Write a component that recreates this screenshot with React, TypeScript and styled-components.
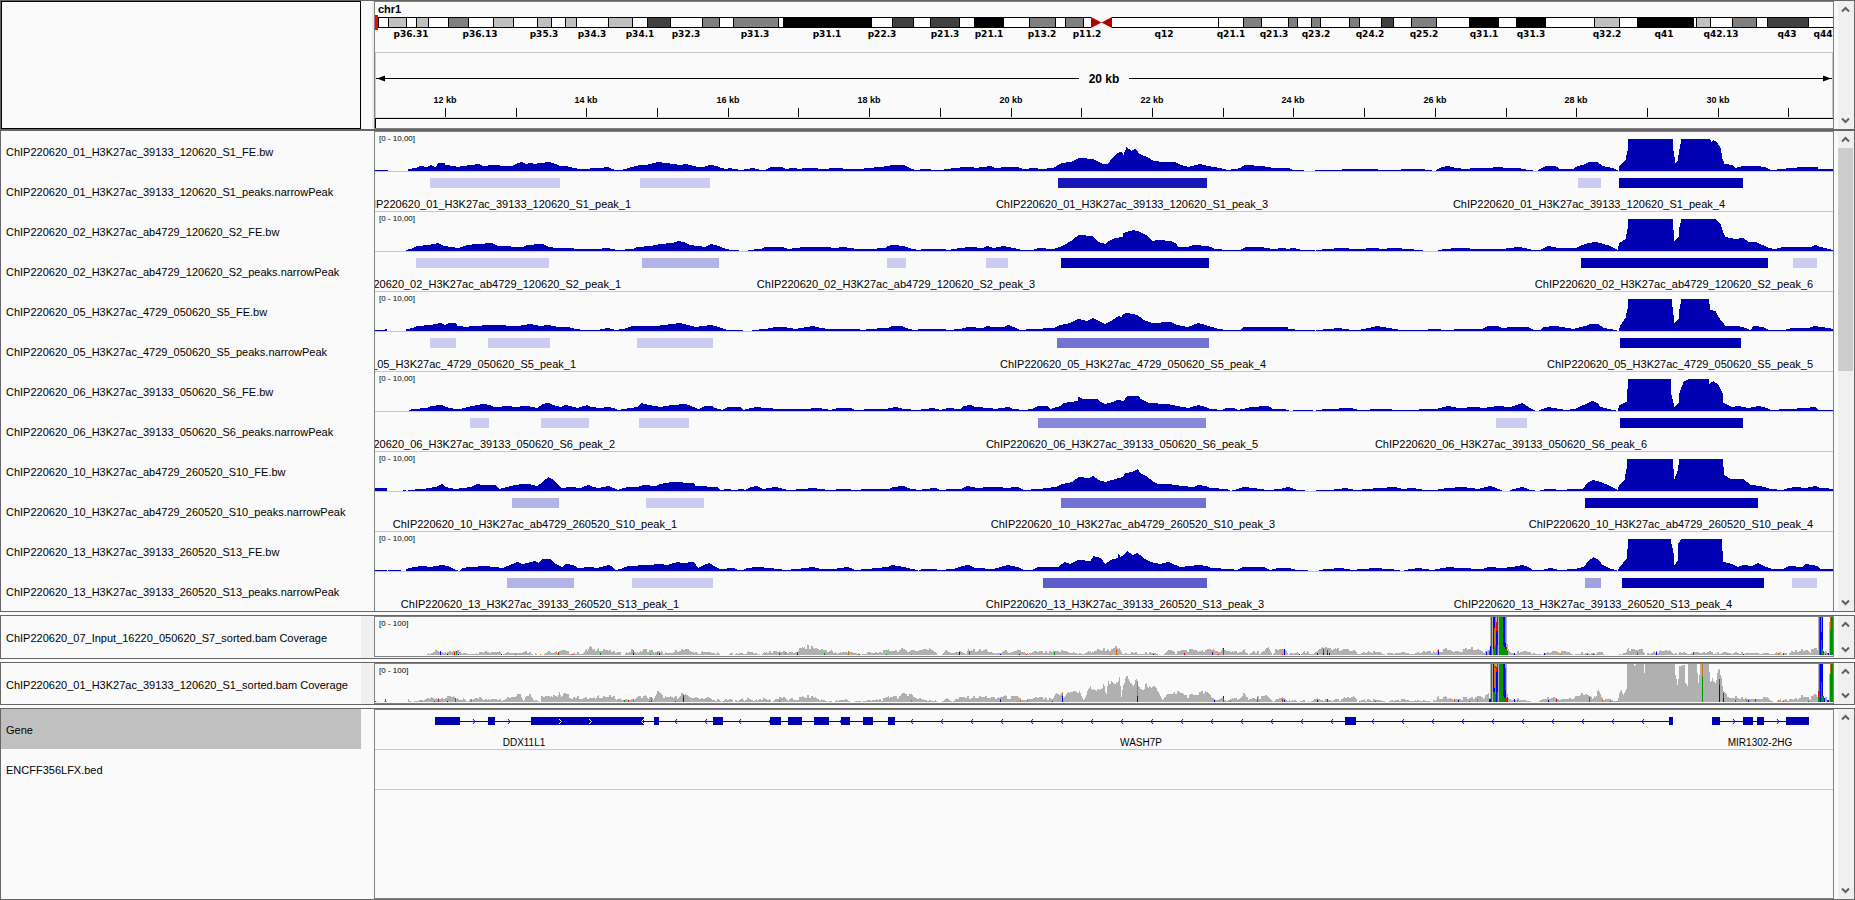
import React from "react";
import styled, { createGlobalStyle } from "styled-components";

/* ---------- data ---------- */

const VIEW_WIDTH = 1458;

const COLORS = {
  signal: "#0000b2",
  coverage: "#b0b0b0",
  rule: "#c8c8d2",
  frame: "#666666",
  innerFrame: "#808080",
  paper: "#fafafa",
};

type Point = [number, number];
type Peak = [start: number, end: number, color: string];
type Label = [center: number, text: string];

const PALE = "#ccccf0";
const SOFT = "#b4b4e8";
const FULL = "#0000b2";

interface Sample {
  name: string;
  bigwig: string;
  peaks: Peak[];
  labels: [number, number][];
}

const SAMPLES: Sample[] = [
  {
    name: "ChIP220620_01_H3K27ac_39133_120620_S1",
    bigwig:
      "0:1 12:1 13:0 32:0 33:2 40:3 45:5 52:4 55:6 60:4 63:8 69:8 70:6 78:5 83:4 87:5 96:6 103:7 107:5 118:6 130:5 137:5 140:7 146:9 150:7 156:8 159:7 165:8 174:9 180:7 185:5 190:5 198:3 205:2 225:3 232:4 237:2 240:1 245:1 250:2 256:4 265:6 270:6 283:9 290:8 298:7 305:6 310:7 315:6 322:4 328:4 334:6 342:5 345:3 352:2 353:3 360:2 365:1 378:3 385:1 390:1 395:4 407:4 410:2 417:3 425:2 428:3 442:3 443:2 465:3 470:2 485:2 492:3 505:4 518:6 528:6 532:4 537:2 540:1 550:2 560:1 568:1 570:2 582:3 587:4 597:4 600:3 615:5 620:3 632:4 642:4 648:2 660:3 665:2 678:3 686:8 695:9 704:13 718:12 723:9 728:7 732:7 737:13 742:18 746:19 748:16 751:24 756:20 760:22 764:17 768:15 772:14 778:10 788:9 800:9 805:6 813:4 824:7 832:5 838:4 845:3 852:1 860:2 865:3 869:6 887:5 898:3 913:3 918:1 927:1 929:0 939:0 940:1 966:1 967:2 985:2 995:2 1010:1 1042:2 1056:1 1057:0 1060:0 1061:1 1067:4 1073:5 1080:3 1090:2 1100:3 1113:3 1123:4 1132:3 1143:3 1153:1 1157:1 1158:0 1162:0 1163:1 1170:5 1180:5 1184:2 1198:2 1202:5 1208:6 1213:9 1222:9 1227:5 1237:3 1242:1 1243:0 1244:5 1250:11 1252:20 1253:32 1297:32 1298:20 1300:8 1302:10 1304:22 1306:32 1334:32 1336:29 1338:31 1342:28 1345:23 1347:12 1349:7 1357:6 1360:3 1368:5 1380:5 1390:4 1395:1 1408:2 1413:3 1430:4 1442:4 1443:2 1458:2",
    peaks: [
      [55, 185, PALE],
      [265, 335, PALE],
      [683, 832, "#1818b8"],
      [1203, 1226, PALE],
      [1244, 1368, FULL],
    ],
    labels: [[120, 1], [757, 3], [1214, 4]],
  },
  {
    name: "ChIP220620_02_H3K27ac_ab4729_120620_S2",
    bigwig:
      "0:0 30:0 31:1 35:2 42:5 53:6 63:8 68:5 76:4 83:3 92:6 102:7 117:8 122:5 148:4 151:6 167:7 173:4 182:3 197:3 200:2 222:2 232:3 242:1 258:2 262:4 275:5 285:7 297:8 303:10 308:9 315:6 330:4 335:7 343:5 347:3 355:1 363:1 364:0 372:0 373:1 385:2 390:4 407:4 413:2 428:4 450:4 460:3 468:4 482:2 493:2 510:3 512:5 518:6 528:5 537:2 543:1 548:2 568:2 572:1 585:3 595:4 607:3 612:5 618:3 628:5 638:3 647:1 657:1 663:3 678:2 687:5 692:8 697:11 703:16 717:15 723:9 730:7 733:10 740:13 747:14 748:18 758:21 765:19 772:15 777:10 783:11 795:10 800:8 803:4 812:4 818:6 832:5 840:2 852:1 865:1 870:4 885:4 897:2 908:3 912:2 918:3 927:1 939:1 940:0 941:1 952:2 965:3 982:2 1000:3 1007:2 1017:3 1035:2 1042:1 1047:1 1048:0 1062:0 1063:1 1070:2 1082:3 1107:2 1127:2 1143:4 1150:3 1157:1 1165:1 1173:5 1183:3 1200:3 1207:6 1213:8 1220:9 1228:7 1235:5 1242:1 1244:8 1250:12 1252:22 1253:32 1297:32 1299:10 1303:14 1304:24 1306:32 1340:32 1345:27 1348:18 1350:14 1360:12 1368:13 1373:9 1380:9 1387:6 1393:3 1400:2 1408:4 1435:4 1440:6 1445:4 1453:2 1458:1",
    peaks: [
      [41, 174, PALE],
      [267, 344, SOFT],
      [512, 531, PALE],
      [611, 633, PALE],
      [686, 834, FULL],
      [1206, 1393, FULL],
      [1418, 1442, PALE],
    ],
    labels: [[107, 1], [521, 3], [1299, 6]],
  },
  {
    name: "ChIP220620_05_H3K27ac_4729_050620_S5",
    bigwig:
      "0:1 9:1 10:2 11:2 12:0 30:0 31:2 38:3 42:5 55:6 65:8 70:6 73:8 80:8 82:5 92:4 95:5 118:6 142:5 155:7 165:5 173:6 183:4 192:4 200:2 208:1 222:1 232:3 240:1 248:2 257:5 282:5 288:6 305:8 312:6 320:4 335:6 343:4 352:1 367:1 368:0 376:0 377:1 390:2 400:4 408:4 420:2 437:5 445:3 453:2 478:2 490:1 492:2 512:3 517:5 527:5 530:3 538:1 548:2 568:2 572:1 585:2 593:4 608:3 612:5 617:4 628:4 633:6 638:4 645:1 657:2 678:3 685:6 695:8 703:12 712:10 718:13 723:10 730:7 737:11 743:15 746:14 748:17 752:18 762:16 768:11 777:8 795:9 802:6 812:4 823:8 833:5 843:2 852:1 865:1 868:4 882:4 912:4 913:2 925:1 939:1 940:0 941:1 955:2 963:3 977:1 983:1 993:3 1002:5 1013:3 1025:1 1050:1 1055:2 1075:1 1083:2 1107:2 1113:5 1122:5 1127:3 1137:4 1153:4 1158:1 1165:1 1168:4 1180:5 1198:2 1210:5 1215:7 1223:7 1228:3 1240:1 1242:0 1243:0 1245:6 1250:13 1252:22 1253:32 1296:32 1299:8 1303:12 1304:22 1306:32 1333:32 1335:21 1340:20 1343:14 1350:5 1363:5 1370:3 1375:1 1378:5 1388:4 1393:1 1408:1 1417:3 1433:3 1439:5 1453:3 1458:2",
    peaks: [
      [55, 81, PALE],
      [113, 175, PALE],
      [262, 338, PALE],
      [682, 834, "#7272d4"],
      [1245, 1366, FULL],
    ],
    labels: [[68, 1], [758, 4], [1305, 5]],
  },
  {
    name: "ChIP220620_06_H3K27ac_39133_050620_S6",
    bigwig:
      "0:0 33:0 34:1 38:2 52:3 55:5 67:6 70:4 80:2 85:2 92:4 107:7 115:6 118:4 135:5 138:4 152:5 162:3 167:7 173:8 178:6 185:4 190:6 202:3 212:6 215:4 225:3 233:4 238:3 242:1 255:3 262:4 266:8 273:6 285:4 297:6 310:7 318:4 323:2 330:5 337:5 339:3 347:1 353:4 365:4 368:1 375:3 382:4 388:3 407:2 428:2 443:3 455:1 462:3 475:3 480:1 485:1 492:2 510:2 520:4 528:2 542:1 558:3 565:1 572:3 585:2 588:5 595:6 600:4 615:3 619:2 633:4 638:2 648:1 657:2 662:5 672:5 675:2 685:5 688:8 702:10 703:14 707:12 722:12 725:9 730:7 737:9 742:11 748:10 752:15 763:15 765:12 773:8 792:7 807:4 813:3 823:6 830:4 835:2 847:1 850:3 858:3 862:1 868:2 875:4 893:5 897:2 908:2 913:1 914:0 917:0 918:1 937:1 938:0 940:0 941:1 952:2 975:3 984:1 1005:2 1027:1 1060:2 1073:5 1083:3 1100:4 1108:3 1122:5 1135:4 1147:8 1153:4 1158:1 1160:0 1163:0 1164:1 1173:4 1190:1 1200:2 1208:6 1217:10 1222:8 1225:4 1238:1 1242:0 1244:6 1251:9 1252:22 1253:32 1295:32 1296:16 1299:4 1303:8 1304:18 1308:29 1313:32 1333:32 1334:27 1338:30 1343:26 1347:18 1348:8 1357:4 1363:5 1373:3 1383:5 1392:3 1395:1 1413:2 1430:3 1440:4 1443:1 1458:1",
    peaks: [
      [95, 114, PALE],
      [166, 214, PALE],
      [264, 314, PALE],
      [663, 831, "#8888da"],
      [1121, 1152, PALE],
      [1245, 1368, FULL],
    ],
    labels: [[104, 2], [747, 5], [1136, 6]],
  },
  {
    name: "ChIP220620_10_H3K27ac_ab4729_260520_S10",
    bigwig:
      "0:3 11:3 12:0 27:0 28:1 30:1 31:0 32:0 33:1 47:2 60:4 67:7 70:4 80:2 95:4 102:7 107:6 120:6 124:2 135:5 146:7 153:7 162:5 167:9 173:14 178:11 183:6 186:3 195:4 205:3 213:6 218:4 223:3 233:5 238:3 242:1 252:4 262:4 268:6 280:5 285:7 297:9 318:8 320:5 342:4 345:1 352:2 358:1 367:2 370:1 375:4 382:5 387:2 400:4 413:1 428:2 438:3 453:1 468:2 482:1 490:2 513:2 518:4 528:5 532:3 543:1 550:2 560:3 565:1 577:2 585:2 592:5 602:3 613:4 625:4 630:3 642:4 648:1 663:2 672:3 680:4 687:7 697:9 703:14 713:13 718:15 723:11 730:9 740:12 747:14 750:18 757:19 762:22 765:18 772:14 777:10 782:7 793:7 807:5 818:4 823:6 830:5 835:3 852:2 855:0 862:2 868:4 878:3 892:1 905:2 913:4 922:1 928:1 930:0 940:0 941:1 955:1 970:3 980:1 993:2 1003:3 1020:4 1027:2 1037:3 1050:1 1060:1 1072:3 1088:4 1103:2 1115:5 1123:2 1126:1 1127:0 1134:0 1135:1 1147:4 1155:1 1159:1 1160:0 1164:0 1165:1 1173:2 1187:1 1197:2 1207:2 1212:8 1217:11 1222:10 1230:7 1237:4 1242:1 1244:6 1249:11 1251:22 1252:32 1297:32 1299:12 1302:20 1304:32 1347:32 1349:16 1355:12 1368:12 1375:6 1385:5 1395:2 1407:1 1413:3 1420:4 1430:3 1440:5 1444:3 1450:3 1457:2",
    peaks: [
      [137, 184, SOFT],
      [271, 329, PALE],
      [686, 831, "#7272d4"],
      [1210, 1383, FULL],
    ],
    labels: [[160, 1], [758, 3], [1296, 4]],
  },
  {
    name: "ChIP220620_13_H3K27ac_39133_260520_S13",
    bigwig:
      "0:1 11:1 12:0 13:1 25:1 26:0 30:0 31:2 38:4 48:5 55:4 67:6 75:4 80:1 84:0 87:3 95:4 110:5 128:3 132:5 142:9 147:7 160:10 163:8 167:12 175:12 180:7 187:4 190:7 198:6 202:3 215:4 222:3 233:6 237:4 240:1 245:2 253:5 272:6 285:7 292:6 302:9 307:8 318:9 323:3 328:6 334:8 340:4 345:2 358:3 363:1 368:1 372:3 382:4 395:3 410:1 422:2 437:4 445:2 458:2 472:4 480:1 492:2 512:4 517:6 528:4 537:2 541:1 543:0 547:2 560:2 563:1 578:2 587:5 593:6 600:3 618:2 632:6 642:4 648:1 657:1 663:4 683:4 689:9 695:7 703:11 715:10 718:15 725:13 730:7 735:11 742:13 743:17 745:14 748:16 752:20 757:16 762:18 768:13 775:9 785:7 793:9 800:6 805:4 823:6 832:5 835:3 855:2 862:1 868:4 888:4 895:1 902:3 913:3 922:1 932:1 933:0 943:0 944:1 952:2 965:3 977:1 987:2 1000:3 1013:2 1024:1 1025:0 1028:0 1029:1 1043:3 1057:1 1073:4 1083:3 1107:2 1113:4 1127:3 1137:4 1147:6 1153:4 1157:1 1167:1 1175:3 1183:1 1200:2 1208:4 1213:10 1218:14 1223:11 1227:6 1233:3 1240:1 1242:0 1244:4 1251:12 1252:22 1253:32 1295:32 1298:18 1299:6 1302:10 1303:28 1306:32 1346:32 1347:20 1348:9 1357:7 1362:4 1368:6 1377:5 1383:8 1388:5 1397:2 1408:2 1413:5 1427:4 1430:7 1442:5 1445:2 1457:2",
    peaks: [
      [132, 199, SOFT],
      [257, 338, PALE],
      [668, 832, "#5c5ccc"],
      [1210, 1226, "#a0a0e2"],
      [1247, 1389, FULL],
      [1417, 1442, PALE],
    ],
    labels: [[165, 1], [750, 3], [1218, 4]],
  },
];

interface Coverage {
  name: string;
  depth: string;
  /* "x:colour-height[,colour-height]" with the segments stacked from the bottom */
  mismatches: string;
}

const COVERAGES: Coverage[] = [
  {
    name: "ChIP220620_07_Input_16220_050620_S7_sorted.bam Coverage",
    depth:
      "0:0 50:0 53:2 65:4 72:2 82:4 87:2 92:1 100:2 123:4 127:1 130:3 142:2 150:4 160:1 162:0 167:1 174:4 178:1 183:4 190:4 195:2 208:2 212:5 215:9 218:4 223:6 228:6 237:3 248:1 258:5 263:1 267:6 273:4 282:3 290:2 295:1 303:5 310:5 318:3 323:1 327:4 335:2 342:2 345:0 352:0 355:2 358:0 362:1 377:3 383:1 386:0 390:2 400:4 408:3 418:2 423:5 428:7 435:8 442:6 455:4 462:1 467:3 475:3 482:1 493:2 500:2 505:3 517:5 533:5 540:4 548:6 558:5 562:1 565:0 567:2 570:4 578:2 585:3 591:1 594:6 600:4 612:5 618:1 632:4 637:2 645:4 653:1 660:3 678:3 688:4 705:1 715:3 727:6 737:5 742:8 747:1 758:2 773:2 785:1 788:0 790:3 794:5 800:2 807:5 815:5 822:5 825:3 832:5 838:5 845:3 848:7 855:2 870:5 873:0 878:3 887:2 893:7 897:0 900:5 910:5 913:1 920:3 925:0 930:3 938:1 948:7 958:6 968:5 978:4 984:1 997:3 1005:3 1010:1 1017:1 1030:2 1045:2 1053:4 1060:2 1063:5 1073:5 1080:4 1097:7 1102:4 1112:4 1114:6 1115:38 1131:38 1132:9 1133:4 1140:2 1150:4 1157:2 1165:1 1177:3 1187:3 1197:1 1202:1 1210:2 1227:2 1230:0 1245:1 1253:5 1267:4 1270:1 1280:3 1293:5 1298:1 1305:2 1313:1 1330:3 1342:2 1363:2 1380:2 1395:1 1405:2 1413:1 1420:4 1428:5 1435:4 1440:6 1442:5 1443:38 1447:38 1448:4 1453:3 1454:33 1455:38 1458:38",
    mismatches:
      "65:b3,r1 72:b1 79:r3 81:g4 83:b1 126:b1 140:g1 165:o1 183:g2,r1 197:r1 225:g2 258:b2,o3 275:g1 282:o3 284:b2 404:r2 410:o3 422:b1,r2 449:g2 473:o4 484:r1 511:g1 536:o1 584:b3 594:g3,r1 625:b1 644:b1 651:r1 679:g3 735:o1 741:o4,r1 778:b1 809:r2 837:b2,r1 843:r1 848:g6,b1 907:r1 909:b6 924:b1 942:b2 948:b2,r4 952:b2,r3 954:b2 1063:b4,r1 1111:b3 1114:r4 1115:b9 1116:g38 1118:g6,b32 1119:g8,o19,b11 1120:g10,o28 1121:b24,r9 1122:g10,b14,r14 1124:g38 1125:g38 1126:g38 1127:g38 1128:g10,b28 1129:g8,b30 1130:g6,b6,o26 1131:g6,r2 1132:r4 1139:b2 1169:b2 1185:o1 1212:b1 1218:b1 1262:g2,o1 1281:b3,o1 1318:r3 1352:o1 1368:b1 1403:o2 1408:r2 1444:g38 1445:b38 1446:g15,b8,o15 1447:g6,b32 1448:g2,r2 1450:b1 1452:o2 1453:b2 1455:g25,o13 1456:g6,r32 1457:g38",
  },
  {
    name: "ChIP220620_01_H3K27ac_39133_120620_S1_sorted.bam Coverage",
    depth:
      "0:1 1:1 3:0 8:0 10:2 12:0 15:1 18:0 32:0 33:2 36:0 42:1 50:3 56:6 60:2 65:4 72:4 78:5 83:2 88:3 92:0 95:3 102:5 110:2 120:4 125:2 133:5 140:6 145:10 148:2 152:7 155:7 160:1 165:1 166:7 175:6 181:5 184:10 186:4 189:8 195:5 200:5 207:4 213:4 218:3 223:6 237:5 243:2 248:3 258:2 263:5 268:6 278:3 282:10 287:6 293:4 302:5 305:8 308:8 312:5 320:4 333:4 338:2 343:2 346:0 350:3 355:3 358:0 368:3 378:2 390:3 397:1 405:5 413:2 422:3 428:5 438:5 445:2 455:1 458:0 462:1 472:3 475:0 482:1 493:1 502:2 510:3 518:7 522:5 528:7 535:9 538:5 547:3 553:1 560:2 563:0 572:3 577:1 585:4 595:5 605:5 613:5 620:3 627:6 633:4 640:5 647:2 655:2 662:4 672:3 678:3 680:7 687:8 688:4 695:12 702:9 704:10 708:2 715:15 723:11 728:17 731:10 733:21 740:16 744:23 746:5 748:18 752:26 757:15 761:21 767:13 771:17 775:13 780:15 783:11 787:3 791:8 797:7 800:10 805:9 812:6 822:8 830:10 837:4 840:2 848:4 852:1 863:4 870:9 873:2 880:4 892:5 897:1 907:4 915:1 920:3 922:0 928:1 931:0 942:3 946:1 952:2 962:2 978:5 982:1 997:2 1008:2 1010:0 1017:1 1033:2 1053:1 1056:0 1061:2 1063:5 1077:3 1083:4 1095:4 1108:5 1113:8 1114:4 1115:38 1131:38 1132:6 1133:3 1143:3 1153:1 1157:0 1163:0 1167:4 1180:3 1193:2 1202:6 1210:8 1215:7 1217:3 1223:10 1227:3 1242:2 1243:6 1246:14 1248:8 1251:15 1252:38 1258:38 1259:36 1261:38 1268:38 1269:29 1270:38 1299:38 1300:26 1302:19 1303:25 1304:36 1309:37 1310:18 1312:16 1313:38 1321:38 1323:18 1325:38 1333:38 1335:18 1337:24 1340:20 1344:33 1346:24 1348:9 1353:5 1362:4 1368:4 1380:3 1390:4 1397:1 1400:0 1405:2 1417:2 1423:4 1428:6 1435:4 1440:7 1442:5 1443:38 1447:38 1448:6 1453:3 1454:27 1455:38 1458:38",
    mismatches:
      "0:r1 10:g2,r1 46:o1 59:r1 63:r3 72:b1 80:g4 96:o3 249:g2 253:r2 258:o3 274:g1 276:g2,o3 300:r1 308:b5,r2 404:o2 536:o2 625:b2,r1 642:o1 645:o2 652:o2 677:g1 687:b6,o3 762:b6,o15 839:b2 848:g4,b2 855:g1 882:g2,o3 907:r3 909:b2 942:b2 952:r3 984:o1 1000:r1 1079:o3 1083:b2 1094:g1 1102:o3 1114:b3 1115:b3 1116:g38 1118:g10,b28 1119:g10,b4,o24 1120:g8,o26,r2 1121:b30,r5 1122:g10,b22,r6 1124:g38 1125:g38 1126:g38 1127:g38 1128:g6,b32 1129:g4,b34 1130:g4,b8,r22 1131:r4 1132:r5 1139:b3 1142:o2 1173:b2 1181:r3 1214:g4,r1 1227:o2 1235:r1 1242:o1 1327:g26,o12 1344:b17,r6 1348:b4,r5 1360:g2 1371:o2 1373:b2 1380:r3 1403:o2 1408:g1 1412:o1 1433:g1 1443:g5,r6 1444:g38 1445:b38 1446:g20,b18 1447:g6,b32 1448:g2,r4 1449:b4 1452:r2 1453:b2 1455:g28,o10 1456:g6,r32 1457:g38",
  },
];

const SHADES = ["#c0c0c0", "#808080", "#404040", "#000000"];

/* start, end and stain level of each stained cytoband */
const BANDS: [number, number, number][] = [
  [13, 31, 0], [41, 53, 0], [73, 93, 1], [118, 138, 0], [162, 176, 0], [190, 201, 0],
  [233, 257, 0], [272, 295, 2], [327, 344, 1], [358, 403, 1], [408, 496, 3], [517, 538, 2],
  [555, 584, 2], [599, 628, 3], [654, 680, 1], [690, 708, 1], [868, 886, 1], [913, 922, 1],
  [936, 945, 1], [974, 984, 1], [1006, 1018, 2], [1036, 1061, 1], [1094, 1123, 3],
  [1141, 1170, 3], [1219, 1244, 0], [1262, 1318, 3], [1321, 1335, 0], [1357, 1381, 1],
  [1392, 1433, 2],
];

const BAND_LABELS: Label[] = [
  [36, "p36.31"], [105, "p36.13"], [169, "p35.3"], [217, "p34.3"], [265, "p34.1"],
  [311, "p32.3"], [380, "p31.3"], [452, "p31.1"], [507, "p22.3"], [570, "p21.3"],
  [614, "p21.1"], [667, "p13.2"], [712, "p11.2"], [789, "q12"], [856, "q21.1"],
  [899, "q21.3"], [941, "q23.2"], [995, "q24.2"], [1049, "q25.2"], [1109, "q31.1"],
  [1156, "q31.3"], [1232, "q32.2"], [1289, "q41"], [1346, "q42.13"], [1412, "q43"],
  [1448, "q44"],
];

const TICKS = [
  70, 141, 211, 282, 353, 423, 494, 565, 636, 706, 777, 848, 918, 989, 1060, 1131, 1201,
  1272, 1343, 1413,
];

const EXONS: [number, number][] = [
  [60, 85], [113, 120], [156, 269], [279, 284], [338, 348], [395, 406], [413, 427],
  [439, 454], [466, 475], [488, 498], [513, 520], [970, 981], [1294, 1298], [1337, 1345],
  [1368, 1378], [1382, 1389], [1411, 1434],
];

const TRANSCRIPTS: [number, number][] = [[60, 269], [269, 1298], [1337, 1434]];

const FORWARD = [99, 134, 1359, 1403];
const REVERSE = [
  300, 330, 364, 394, 465,
  ...Array.from({ length: 15 }, (_, i) => 536 + i * 30),
  ...Array.from({ length: 10 }, (_, i) => 997 + i * 30),
];

const GENE_LABELS: Label[] = [[149, "DDX11L1"], [766, "WASH7P"], [1385, "MIR1302-2HG"]];

/* ---------- drawing helpers ---------- */

const percent = (x: number) => `${(x / VIEW_WIDTH) * 100}%`;

const parsePoints = (text: string): Point[] =>
  text.split(" ").map((pair) => pair.split(":").map(Number) as Point);

/* Columns of whole-pixel heights, merged into one stepped outline */
function steppedArea(points: Point[], height: number, jitter: boolean) {
  let path = `M0 ${height}`;
  let segment = 0;
  for (let x = 0; x < VIEW_WIDTH; x += 1) {
    while (segment < points.length - 2 && points[segment + 1][0] <= x) segment += 1;
    const [x0, y0] = points[segment];
    const [x1, y1] = points[segment + 1];
    const t = Math.min(1, (x - x0) / Math.max(1, x1 - x0));
    let value = y0 + (y1 - y0) * t;
    if (jitter && value > 0.5 && value < 30) {
      const seed = Math.sin(Math.floor(x / 2) * 12.9898) * 43758.5453;
      const noise = seed - Math.floor(seed) - 0.5;
      value += noise * Math.min(5, 2 + value * 0.3);
    }
    const top = height - Math.max(0, Math.min(height, Math.round(value)));
    path += `V${top}H${x + 1}`;
  }
  return `${path}V${height}Z`;
}

const BASE_COLORS: Record<string, string> = {
  r: "#ff0000",
  g: "#009600",
  b: "#0000ff",
  o: "#d17105",
};

/* ---------- styles ---------- */

const GlobalStyle = createGlobalStyle`
  * { box-sizing: border-box; }
  body {
    margin: 0;
    background: ${COLORS.paper};
    color: #000;
    font-family: "Liberation Sans", Arial, sans-serif;
    font-size: 11px;
  }
`;

const Browser = styled.main`
  display: flex;
  flex-direction: column;
  min-height: 100vh;
`;

const Panel = styled.section<{ $grow?: boolean; $gap?: boolean }>`
  display: grid;
  grid-template-columns: 360px 13px minmax(0, 1fr) 4px 16px;
  flex: ${(p) => (p.$grow ? "1 0 auto" : "none")};
  margin-top: ${(p) => (p.$gap ? 3 : 0)}px;
  border: 1px solid ${COLORS.frame};
`;

const EmptyName = styled.div`
  border: 1px solid #000;
`;

const NameList = styled.div`
  display: flex;
  flex-direction: column;
  height: 0;
  min-height: 100%;
  overflow: hidden;
`;

const TrackName = styled.div<{ $selected?: boolean; $fill?: boolean }>`
  display: flex;
  align-items: center;
  flex: ${(p) => (p.$fill ? "1" : "none")};
  height: 40px;
  padding: 2px 0 0 5px;
  line-height: 12px;
  white-space: nowrap;
  background: ${(p) => (p.$selected ? "#c0c0c0" : "transparent")};
`;

const Gutter = styled.div<{ $tone?: "edge" | "solid" }>`
  background: ${(p) => (p.$tone === "solid" ? "#f0f0f0" : "transparent")};
  border-right: ${(p) => (p.$tone === "edge" ? "2px solid #ececec" : "none")};
`;

const DataArea = styled.div<{ $open?: boolean; $lifted?: boolean }>`
  border: 1px solid ${COLORS.innerFrame};
  border-bottom-width: ${(p) => (p.$open ? 0 : 1)}px;
  margin-bottom: ${(p) => (p.$lifted ? 1 : 0)}px;
  overflow: hidden;
`;

const Track = styled.div<{ $height: number; $ruled?: boolean }>`
  height: ${(p) => p.$height}px;
  border-bottom: ${(p) => (p.$ruled ? `1px solid ${COLORS.rule}` : "none")};
`;

const Canvas = styled.svg`
  display: block;
  width: 100%;
  height: 100%;
  overflow: hidden;
`;

const FeatureText = styled.text`
  font-size: 11px;
  text-anchor: middle;
`;

const GeneText = styled.text`
  font-size: 10px;
  text-anchor: middle;
`;

const ScaleText = styled.text`
  font-size: 8px;
`;

const BandText = styled.text`
  font-family: "DejaVu Sans", sans-serif;
  font-size: 9px;
  font-weight: bold;
  text-anchor: middle;
`;

const ChromosomeText = styled.text`
  font-size: 11px;
  font-weight: bold;
`;

const TickText = styled.text`
  font-size: 9px;
  font-weight: bold;
  text-anchor: middle;
`;

const SpanText = styled.text`
  font-size: 12px;
  font-weight: bold;
  text-anchor: middle;
`;

const ScrollRail = styled.div`
  display: flex;
  flex-direction: column;
  justify-content: space-between;
  background: #f0f0f0;
`;

const ScrollButton = styled.button`
  display: flex;
  align-items: center;
  justify-content: center;
  height: 17px;
  padding: 0 1px 0 0;
  border: 0;
  background: none;
`;

const ScrollTrough = styled.div`
  flex: 1;
`;

const ScrollThumb = styled.div`
  width: 15px;
  height: 50%;
  background: #cdcdcd;
`;

/* ---------- components ---------- */

function Plot({ height, children }: { height: number; children: React.ReactNode }) {
  return (
    <svg
      width="100%"
      height={height}
      viewBox={`0 0 ${VIEW_WIDTH} ${height}`}
      preserveAspectRatio="none"
      shapeRendering="crispEdges"
    >
      {children}
    </svg>
  );
}

function Chevron({ up }: { up?: boolean }) {
  return (
    <svg width="9" height="7" viewBox="0 0 9 7" aria-hidden="true">
      <path
        d={up ? "M1 5.5L4.5 2L8 5.5" : "M1 1.5L4.5 5L8 1.5"}
        fill="none"
        stroke="#606060"
        strokeWidth="2"
      />
    </svg>
  );
}

function ScrollBar({ label, thumb }: { label: string; thumb?: boolean }) {
  return (
    <ScrollRail>
      <ScrollButton type="button" aria-label={`Scroll ${label} up`}>
        <Chevron up />
      </ScrollButton>
      <ScrollTrough>{thumb && <ScrollThumb />}</ScrollTrough>
      <ScrollButton type="button" aria-label={`Scroll ${label} down`}>
        <Chevron />
      </ScrollButton>
    </ScrollRail>
  );
}

function Ideogram() {
  return (
    <Plot height={126}>
      <rect x="3.5" y="15.5" width="1456" height="10" fill="#fff" stroke="#000" />
      {BANDS.map(([start, end, shade]) => (
        <rect
          key={start}
          x={start + 0.5}
          y="15.5"
          width={end - start}
          height="10"
          fill={SHADES[shade]}
          stroke="#000"
        />
      ))}
      <rect x="843" y="15" width="1" height="11" />
      <rect x="716" y="15" width="21" height="11" fill={COLORS.paper} />
      <g fill="#b20000" shapeRendering="auto">
        <path d="M716 15L726.5 20.5L716 26Z" />
        <path d="M737 15L726.5 20.5L737 26Z" />
      </g>
      <rect x="0" y="13" width="3" height="15" fill="#ff0000" />
    </Plot>
  );
}

function Ruler() {
  return (
    <Plot height={126}>
      <path d="M0.5 116V50.5H1457.5V116" fill="none" stroke={COLORS.rule} />
      <rect x="0" y="115" width="1458" height="1" fill="#dcdce2" />
      <rect x="1" y="76" width="703" height="1" />
      <rect x="754" y="76" width="703" height="1" />
      <g shapeRendering="auto">
        <path d="M2 76.5L10 73.5V79.5Z" />
        <path d="M1456 76.5L1448 73.5V79.5Z" />
      </g>
      {TICKS.map((x) => (
        <rect key={x} x={x} y="106" width="1" height="9" />
      ))}
      <path d="M0.5 126V116.5H1458" fill="none" stroke="#000" />
    </Plot>
  );
}

function HeaderTrack() {
  return (
    <Track $height={126}>
      <Canvas role="img" aria-label="Chromosome 1 ideogram and ruler">
        <Ideogram />
        <Ruler />
        <ChromosomeText x="3" y="11">
          chr1
        </ChromosomeText>
        {BAND_LABELS.map(([x, text]) => (
          <BandText key={text} x={percent(x)} y="35">
            {text}
          </BandText>
        ))}
        <SpanText x="50%" y="81">
          20 kb
        </SpanText>
        {TICKS.filter((_, i) => i % 2 === 0).map((x, i) => (
          <TickText key={x} x={percent(x)} y="101">
            {`${12 + i * 2} kb`}
          </TickText>
        ))}
      </Canvas>
    </Track>
  );
}

function SignalTrack({ sample }: { sample: Sample }) {
  return (
    <Track $height={40} $ruled>
      <Canvas role="img" aria-label={`${sample.name} signal`}>
        <Plot height={39}>
          <path
            d={steppedArea(parsePoints(sample.bigwig), 39, false)}
            fill={COLORS.signal}
          />
        </Plot>
        <ScaleText x="4" y="9">
          [0 - 10,00]
        </ScaleText>
      </Canvas>
    </Track>
  );
}

function PeakTrack({ sample }: { sample: Sample }) {
  return (
    <Track $height={40} $ruled>
      <Canvas role="img" aria-label={`${sample.name} peaks`}>
        <Plot height={39}>
          {sample.peaks.map(([start, end, color]) => (
            <rect key={start} x={start} y="6" width={end - start} height="10" fill={color} />
          ))}
        </Plot>
        {sample.labels.map(([x, index]) => (
          <FeatureText key={index} x={percent(x)} y="36">
            {`${sample.name}_peak_${index}`}
          </FeatureText>
        ))}
      </Canvas>
    </Track>
  );
}

function MismatchColumn({ entry }: { entry: string }) {
  const [x, stack] = entry.split(":");
  let top = 38;
  return (
    <>
      {stack.split(",").map((part, i) => {
        const size = Number(part.slice(1));
        top -= size;
        return (
          <rect key={i} x={x} y={top} width="1" height={size} fill={BASE_COLORS[part[0]]} />
        );
      })}
    </>
  );
}

function CoverageTrack({ coverage }: { coverage: Coverage }) {
  return (
    <Track $height={39}>
      <Canvas role="img" aria-label={coverage.name}>
        <Plot height={39}>
          <path
            d={steppedArea(parsePoints(coverage.depth), 38, true)}
            fill={COLORS.coverage}
          />
          {coverage.mismatches.split(" ").map((entry) => (
            <MismatchColumn key={entry} entry={entry} />
          ))}
        </Plot>
        <ScaleText x="4" y="9">
          [0 - 100]
        </ScaleText>
      </Canvas>
    </Track>
  );
}

function GeneTrack() {
  return (
    <Track $height={40} $ruled>
      <Canvas role="img" aria-label="Gene annotations">
        <Plot height={39}>
          <g fill={COLORS.signal}>
            {TRANSCRIPTS.map(([start, end]) => (
              <rect key={start} x={start} y="11" width={end - start} height="1" />
            ))}
            {EXONS.map(([start, end]) => (
              <rect key={start} x={start} y="7" width={end - start} height="8" />
            ))}
          </g>
          <g fill="none" stroke="#0000d0" shapeRendering="auto">
            {FORWARD.map((x) => (
              <path key={x} d={`M${x - 1} 9L${x + 1} 11.5L${x - 1} 14`} />
            ))}
            {REVERSE.map((x) => (
              <path key={x} d={`M${x + 2} 9L${x} 11.5L${x + 2} 14`} />
            ))}
          </g>
          <g fill="none" stroke="#fff" shapeRendering="auto">
            <path d="M184 9L186.5 11.5L184 14" />
            <path d="M214 9L216.5 11.5L214 14" />
            <path d="M269 9L266.5 11.5L269 14" />
          </g>
        </Plot>
        {GENE_LABELS.map(([x, text]) => (
          <GeneText key={text} x={percent(x)} y="36">
            {text}
          </GeneText>
        ))}
      </Canvas>
    </Track>
  );
}

export default function App() {
  return (
    <>
      <GlobalStyle />
      <Browser>
        <Panel>
          <EmptyName />
          <Gutter $tone="edge" />
          <DataArea>
            <HeaderTrack />
          </DataArea>
          <Gutter />
          <ScrollBar label="header" />
        </Panel>

        <Panel>
          <NameList>
            {SAMPLES.map((sample) => (
              <React.Fragment key={sample.name}>
                <TrackName>{`${sample.name}_FE.bw`}</TrackName>
                <TrackName>{`${sample.name}_peaks.narrowPeak`}</TrackName>
              </React.Fragment>
            ))}
          </NameList>
          <Gutter />
          <DataArea $open>
            {SAMPLES.map((sample, i) => (
              <React.Fragment key={sample.name}>
                <SignalTrack sample={sample} />
                {i < SAMPLES.length - 1 ? (
                  <PeakTrack sample={sample} />
                ) : (
                  <Track $height={39}>
                    <PeakTrack sample={sample} />
                  </Track>
                )}
              </React.Fragment>
            ))}
          </DataArea>
          <Gutter />
          <ScrollBar label="samples" thumb />
        </Panel>

        {COVERAGES.map((coverage, i) => (
          <Panel key={coverage.name} $gap>
            <NameList>
              <TrackName $fill>{coverage.name}</TrackName>
            </NameList>
            <Gutter $tone="solid" />
            <DataArea $lifted={i === 0}>
              <CoverageTrack coverage={coverage} />
            </DataArea>
            <Gutter />
            <ScrollBar label={`coverage ${i + 1}`} />
          </Panel>
        ))}

        <Panel $gap $grow>
          <NameList>
            <TrackName $selected>Gene</TrackName>
            <TrackName>ENCFF356LFX.bed</TrackName>
          </NameList>
          <Gutter />
          <DataArea>
            <GeneTrack />
            <Track $height={40} $ruled />
          </DataArea>
          <Gutter />
          <ScrollBar label="annotations" />
        </Panel>
      </Browser>
    </>
  );
}
